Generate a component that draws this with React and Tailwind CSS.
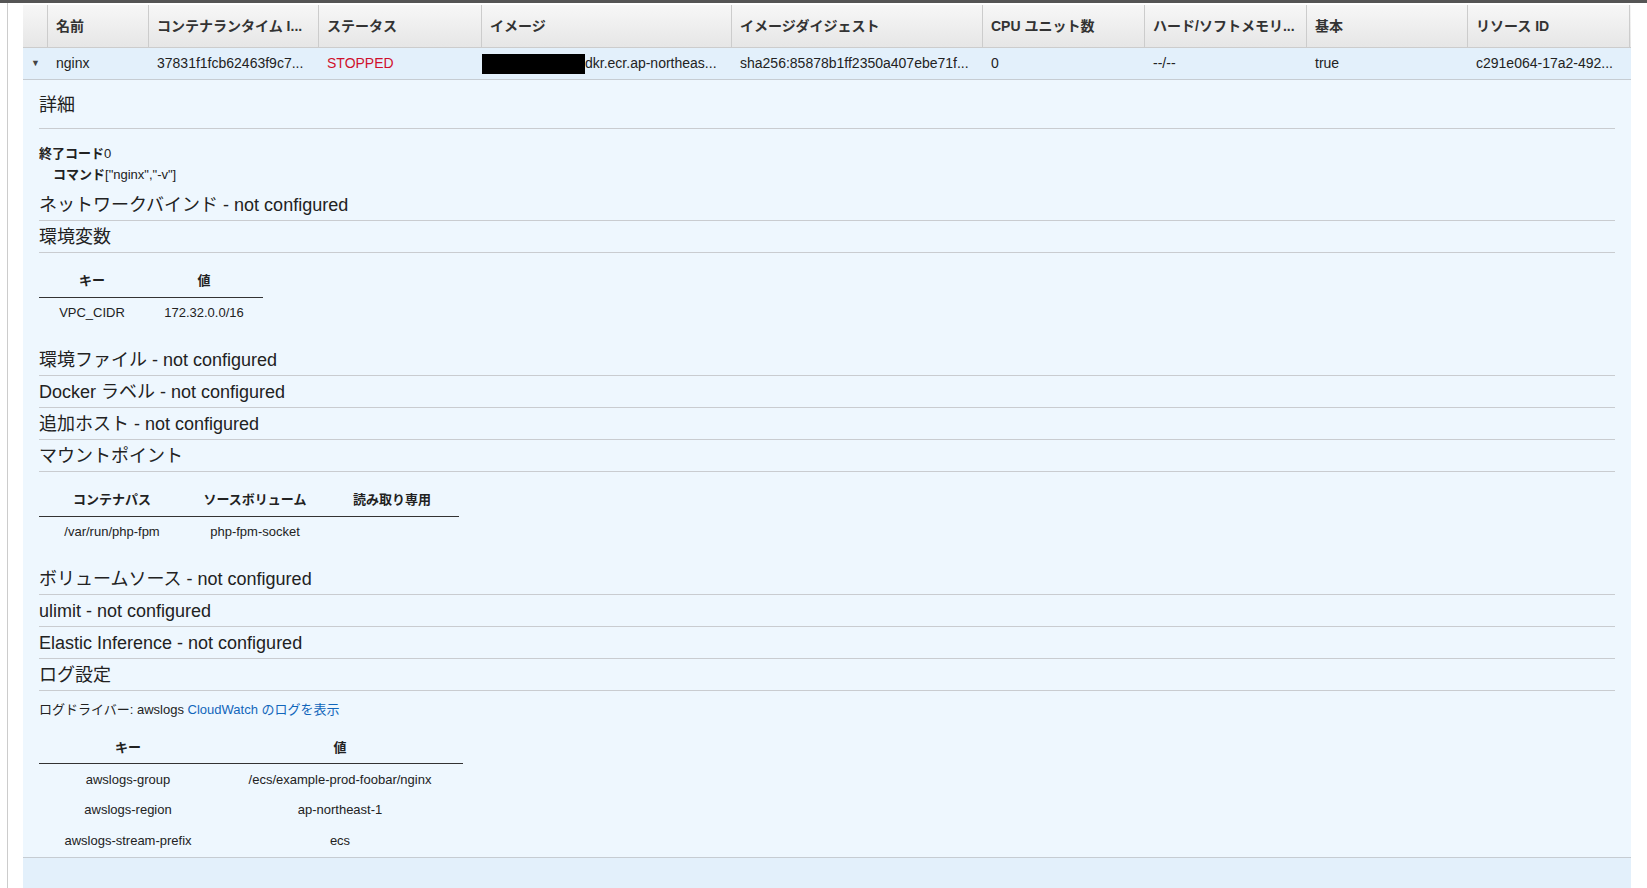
export default function App() {
  const cols = [
    ["名前", 101], ["コンテナランタイム I...", 170], ["ステータス", 163], ["イメージ", 250],
    ["イメージダイジェスト", 251], ["CPU ユニット数", 162], ["ハード/ソフトメモリ...", 162], ["基本", 161], ["リソース ID", 162],
  ];
  const vals = ["nginx", "37831f1fcb62463f9c7...", "STOPPED", "IMG", "sha256:85878b1ff2350a407ebe71f...", "0", "--/--", "true", "c291e064-17a2-492..."];
  const H = ({ children }) => (
    <div className="h-[32px] border-b border-[#c9ccd0] text-[18px] leading-[32px] text-[#222]">{children}</div>
  );
  return (
    <div className="w-[1647px] h-[888px] bg-white overflow-hidden text-[#222]" style={{ fontFamily: '"Liberation Sans","Noto Sans CJK JP",sans-serif' }}>
      <div className="h-[3px] bg-[#555]" />
      <div className="flex h-[885px]">
        <div className="w-[8px] border-r border-[#ccc]" />
        <div className="w-[15px]" />
        <div className="w-[1608px] flex flex-col">
          <div className="h-[43px] flex bg-gradient-to-b from-[#f7f7f7] to-[#e6e6e6] border-b border-[#ccc] mt-[2px]">
            <div className="w-[25px] border-r border-[#ccc]" />
            {cols.map(([t, w]) => (
              <div key={t} style={{ width: w }} className="border-r border-[#ccc] px-[8px] flex items-center text-[14px] font-bold text-[#333] whitespace-nowrap">{t}</div>
            ))}
          </div>
          <div className="h-[32px] flex bg-[#e3f0fb] border-b border-[#c6ccd2] text-[14px]">
            <div className="w-[25px] flex items-center justify-center text-[9px] text-[#444]">▼</div>
            {vals.map((v, i) => (
              <div key={i} style={{ width: cols[i][1] }} className="px-[8px] flex items-center whitespace-nowrap overflow-hidden">
                {v === "IMG" ? (
                  <span className="flex items-center -ml-[8px]"><span className="inline-block w-[103px] h-[20px] bg-black" /><span>dkr.ecr.ap-northeas...</span></span>
                ) : (
                  <span className={v === "STOPPED" ? "text-[#d0102c]" : ""}>{v}</span>
                )}
              </div>
            ))}
          </div>
          <div className="bg-[#eef7fe] pl-[16px] pr-[16px] pt-[12px] flex-1 border-b border-[#c6ccd2] h-[803px] grow-0">
            <div className="h-[37px] border-b border-[#c9ccd0] text-[18px] leading-[26px]">詳細</div>
            <div className="pt-[14px] text-[13px] leading-[21px]">
              <div><b>終了コード</b>0</div>
              <div className="pl-[14px]"><b>コマンド</b>["nginx","-v"]</div>
            </div>
            <div className="mt-[4px]"><H>ネットワークバインド - not configured</H></div>
            <H>環境変数</H>
            <table className="mt-[12px] mb-[16px] text-[13px] border-collapse">
              <thead><tr className="border-b border-[#333]"><th className="w-[106px] h-[32px]">キー</th><th className="w-[118px]">値</th></tr></thead>
              <tbody><tr><td className="h-[31px] text-center">VPC_CIDR</td><td className="text-center">172.32.0.0/16</td></tr></tbody>
            </table>
            <H>環境ファイル - not configured</H>
            <H>Docker ラベル - not configured</H>
            <H>追加ホスト - not configured</H>
            <H>マウントポイント</H>
            <table className="mt-[12px] mb-[16px] text-[13px] border-collapse">
              <thead><tr className="border-b border-[#333]"><th className="w-[146px] h-[32px]">コンテナパス</th><th className="w-[140px]">ソースボリューム</th><th className="w-[134px]">読み取り専用</th></tr></thead>
              <tbody><tr><td className="h-[31px] text-center">/var/run/php-fpm</td><td className="text-center">php-fpm-socket</td><td></td></tr></tbody>
            </table>
            <H>ボリュームソース - not configured</H>
            <H>ulimit - not configured</H>
            <H>Elastic Inference - not configured</H>
            <H>ログ設定</H>
            <div className="text-[13px] mt-[9px]">ログドライバー: awslogs <span className="text-[#1166bb]">CloudWatch のログを表示</span></div>
            <table className="mt-[12px] text-[13px] border-collapse">
              <thead><tr className="border-b border-[#333]"><th className="w-[178px] h-[32px]">キー</th><th className="w-[246px]">値</th></tr></thead>
              <tbody>
                <tr><td className="h-[31px] text-center">awslogs-group</td><td className="text-center">/ecs/example-prod-foobar/nginx</td></tr>
                <tr><td className="h-[31px] text-center">awslogs-region</td><td className="text-center">ap-northeast-1</td></tr>
                <tr><td className="h-[31px] text-center">awslogs-stream-prefix</td><td className="text-center">ecs</td></tr>
              </tbody>
            </table>
          </div>
          <div className="flex-1 bg-[#e3f0fb]" />
        </div>
      </div>
    </div>
  );
}
